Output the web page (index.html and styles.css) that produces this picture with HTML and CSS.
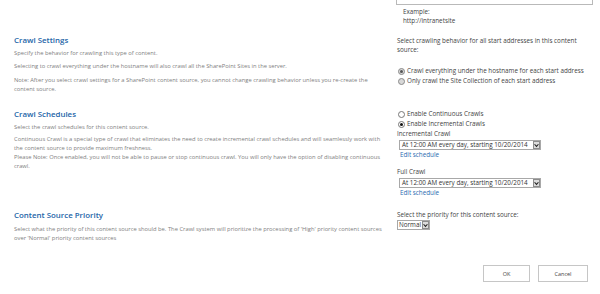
FILE: index.html
```html
<!DOCTYPE html>
<html>
<head>
<meta charset="utf-8">
<link rel="stylesheet" href="styles.css">
</head>
<body>
<div class="page">
  <section class="row row-top">
    <div class="left"></div>
    <div class="right">
      <div class="textbox"></div>
      <div class="example">Example:<br>http://intranetsite</div>
    </div>
  </section>

  <section class="row row-settings">
    <div class="left">
      <h3 class="title">Crawl Settings</h3>
      <p class="desc">Specify the behavior for crawling this type of content.</p>
      <p class="desc">Selecting to crawl everything under the hostname will also crawl all the SharePoint Sites in the server.</p>
      <p class="desc">Note: After you select crawl settings for a SharePoint content source, you cannot change crawling behavior unless you re-create the content source.</p>
    </div>
    <div class="right">
      <p class="label label-wrap">Select crawling behavior for all start addresses in this content source:</p>
      <div class="radios radios-settings">
        <div class="radio"><span class="dot dot-dis-on"></span>Crawl everything under the hostname for each start address</div>
        <div class="radio"><span class="dot dot-dis"></span>Only crawl the Site Collection of each start address</div>
      </div>
    </div>
  </section>

  <section class="row row-schedules">
    <div class="left">
      <h3 class="title">Crawl Schedules</h3>
      <p class="desc">Select the crawl schedules for this content source.</p>
      <p class="desc">Continuous Crawl is a special type of crawl that eliminates the need to create incremental crawl schedules and will seamlessly work with the content source to provide maximum freshness.<br>Please Note: Once enabled, you will not be able to pause or stop continuous crawl. You will only have the option of disabling continuous crawl.</p>
    </div>
    <div class="right">
      <div class="radio"><span class="dot"></span>Enable Continuous Crawls</div>
      <div class="radio"><span class="dot dot-on"></span>Enable Incremental Crawls</div>
      <div class="sched">
        <div class="label">Incremental Crawl</div>
        <div class="indent">
          <div class="select"><span class="sel-text">At 12:00 AM every day, starting 10/20/2014</span><span class="sel-btn"><svg width="6" height="5" viewBox="0 0 6 5"><path d="M0.7 1 L3 3.6 L5.3 1" fill="none" stroke="#222" stroke-width="1.3"/></svg></span></div>
          <a class="link">Edit schedule</a>
        </div>
      </div>
      <div class="sched sched-full">
        <div class="label">Full Crawl</div>
        <div class="indent">
          <div class="select"><span class="sel-text">At 12:00 AM every day, starting 10/20/2014</span><span class="sel-btn"><svg width="6" height="5" viewBox="0 0 6 5"><path d="M0.7 1 L3 3.6 L5.3 1" fill="none" stroke="#222" stroke-width="1.3"/></svg></span></div>
          <a class="link">Edit schedule</a>
        </div>
      </div>
    </div>
  </section>

  <section class="row row-priority">
    <div class="left">
      <h3 class="title">Content Source Priority</h3>
      <p class="desc">Select what the priority of this content source should be. The Crawl system will prioritize the processing of 'High' priority content sources over 'Normal' priority content sources</p>
    </div>
    <div class="right">
      <div class="label">Select the priority for this content source:</div>
      <div class="select select-small"><span class="sel-text">Normal</span><span class="sel-btn"><svg width="6" height="5" viewBox="0 0 6 5"><path d="M0.7 1 L3 3.6 L5.3 1" fill="none" stroke="#222" stroke-width="1.3"/></svg></span></div>
    </div>
  </section>

  <div class="buttons">
    <button class="btn btn-ok">OK</button>
    <button class="btn btn-cancel">Cancel</button>
  </div>
</div>
</body>
</html>
```

FILE: styles.css
```css
* { box-sizing: border-box; }
html, body { margin: 0; padding: 0; background: #fff; }
body {
  font-family: "Open Sans", "Noto Sans", sans-serif;
  width: 600px;
  height: 294px;
  overflow: hidden;
}
.page { padding-left: 14px; }
.row {
  display: grid;
  grid-template-columns: 372px 192px;
  column-gap: 11px;
}
p { margin: 0; }
.title {
  margin: 0;
  font-size: 7.9px;
  font-weight: 600;
  color: #2465a8;
  line-height: 10px;
}
.desc {
  font-size: 5.8px;
  line-height: 9px;
  color: #808080;
  margin-top: 4.5px;
}
.right { color: #444; font-size: 6.3px; line-height: 10px; }
.label { margin: 0; }
.label-wrap { line-height: 9px; margin-top: 1px; }
.textbox {
  height: 5px;
  width: 197px;
  margin-left: -1px;
  border: 1px solid #b9b9b9;
  border-top: none;
}
.example { padding-left: 6px; margin-top: 2px; line-height: 9px; }
.row-settings { margin-top: 10px; }
.row-settings .desc:first-of-type { margin-top: 3.5px; }
.radios-settings { margin-top: 12px; }
.radio { display: flex; align-items: center; white-space: nowrap; height: 10px; }
.dot {
  width: 7px; height: 7px; border-radius: 50%;
  border: 1px solid #777;
  margin-right: 2px;
  margin-left: 1px;
  flex: none;
  position: relative;
  background: #fff;
}
.dot-on::after, .dot-dis-on::after {
  content: ""; position: absolute; left: 1px; top: 1px;
  width: 3px; height: 3px; border-radius: 50%; background: #111;
}
.dot-dis, .dot-dis-on { background: #d8d8d8; border-color: #8a8a8a; }
.dot-dis-on::after { background: #555; }
.row-schedules { margin-top: 15.5px; }
.row-schedules .desc:first-of-type { margin-top: 3.5px; }
.row-schedules .desc + .desc { margin-top: 3px; }
.sched .indent { padding-left: 2px; }
.select {
  display: flex;
  align-items: stretch;
  width: 142px;
  height: 10px;
  border: 1px solid #a8a8a8;
  margin-top: 1px;
  font-size: 6.3px;
  line-height: 8px;
  color: #333;
}
.sel-text { flex: 1; padding-left: 2px; white-space: nowrap; overflow: hidden; }
.sel-btn {
  width: 7px;
  background: #dcdcdc;
  border: 1px solid #8c8c8c;
  display: flex; align-items: center; justify-content: center;
}
.link { display: block; color: #2a6bb0; padding-left: 1px; }
.sched-full { margin-top: 7px; }
.row-priority { margin-top: 12px; }
.row-priority .right .select-small { display: inline-flex; width: auto; margin-top: 0; vertical-align: top; }
.select-small .sel-text { flex: none; padding: 0 1px; overflow: visible; }
.select-small .sel-btn { flex: none; }
.buttons {
  display: flex;
  justify-content: flex-end;
  gap: 8px;
  padding-right: 12px;
  margin-top: 22.5px;
}
.btn {
  font-family: "Open Sans", sans-serif;
  font-size: 5.5px;
  color: #444;
  background: #fff;
  border: 1px solid #c6c6c6;
  height: 17px;
  padding: 0;
}
.btn-ok { width: 47px; }
.btn-cancel { width: 50px; }
```
